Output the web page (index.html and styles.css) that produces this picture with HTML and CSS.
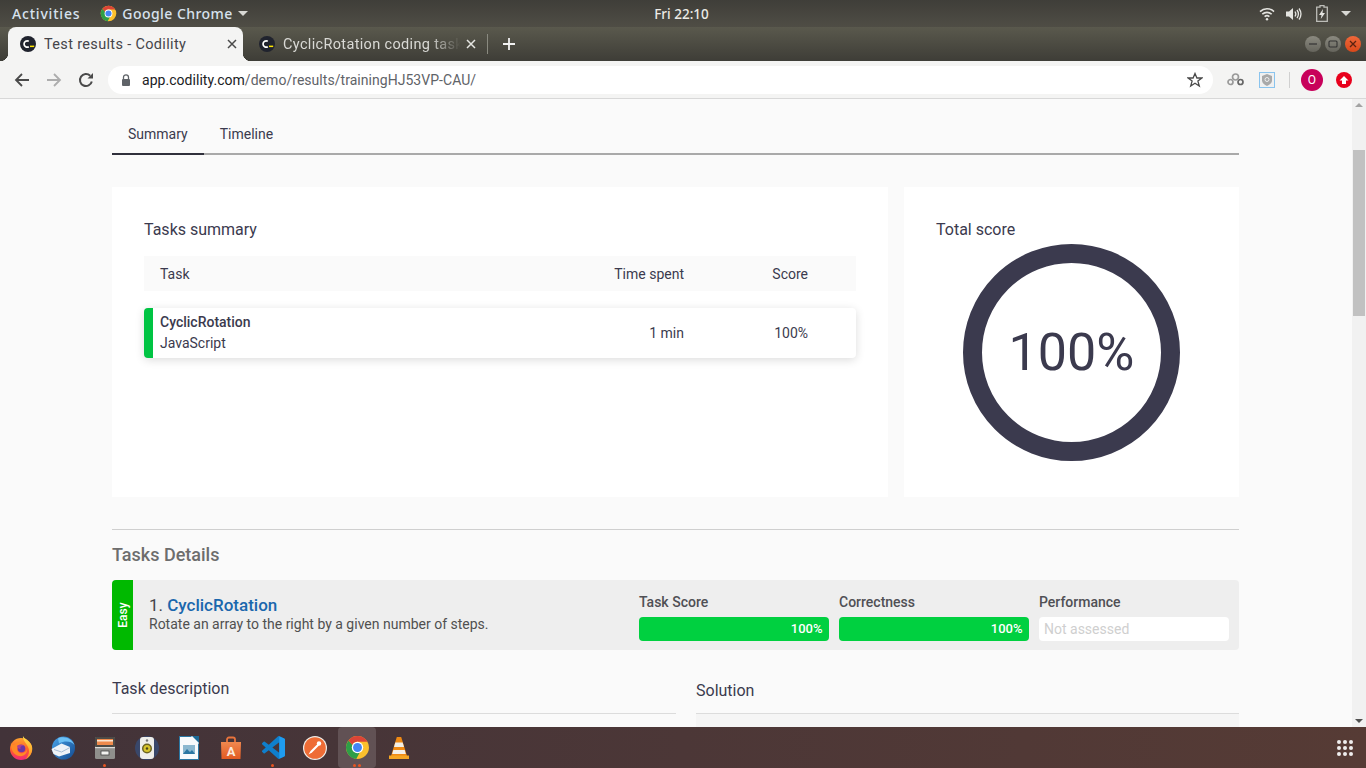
FILE: index.html
```html
<!DOCTYPE html>
<html lang="en">
<head>
    <meta charset="UTF-8">
    <meta name="viewport" content="width=device-width, initial-scale=1.0">
    <title>Test results - Codility</title>
    <link rel="stylesheet" href="styles.css">
</head>
<body>
    <svg class="defs" width="0" height="0">
        <defs>
            <linearGradient id="fox" x1="0" y1="0" x2="0" y2="1">
                <stop offset="0" stop-color="#ffa42e"/>
                <stop offset=".55" stop-color="#ff5a2c"/>
                <stop offset="1" stop-color="#f0297a"/>
            </linearGradient>
            <linearGradient id="flame" x1="0" y1="0" x2="0" y2="1">
                <stop offset="0" stop-color="#ffe04a"/>
                <stop offset="1" stop-color="#ff8a1e"/>
            </linearGradient>
            <linearGradient id="bird" x1="0" y1="0" x2="1" y2="1">
                <stop offset="0" stop-color="#4aa5ea"/>
                <stop offset="1" stop-color="#12498f"/>
            </linearGradient>
            <linearGradient id="bag" x1="0" y1="0" x2="0" y2="1">
                <stop offset="0" stop-color="#f0884f"/>
                <stop offset="1" stop-color="#e25a22"/>
            </linearGradient>
        </defs>
        <symbol id="chrome" viewBox="0 0 24 24">
            <circle cx="12" cy="12" r="11" fill="#fbc02d"/>
            <path d="M3.4 5.2A11 11 0 0 0 10.8 22.93L15 15 7 9Z" fill="#2e9e47"/>
            <path d="M12 1A11 11 0 0 1 21.53 6.5H12A5.5 5.5 0 0 0 7 9.7L3.4 5.2A11 11 0 0 1 12 1Z" fill="#db4437"/>
            <circle cx="12" cy="12" r="5.5" fill="#fff"/>
            <circle cx="12" cy="12" r="4.3" fill="#4285f4"/>
        </symbol>
        <symbol id="codility" viewBox="0 0 16 16">
            <circle cx="8" cy="8" r="8" fill="#20232e"/>
            <path d="M8.800 5.200A3.200 3.200 0 1 0 8.800 10.800" fill="none" stroke="#fff" stroke-width="1.700"/>
            <rect x="10" y="9.600" width="4.200" height="1.500" fill="#ffe600"/>
        </symbol>
    </svg>

    <!-- gnome top bar -->
    <div class="topbar">
        <div class="topbar-left">
            <span class="activities">Activities</span>
            <svg class="app-icon" width="17" height="17"><use href="#chrome"/></svg>
            <span class="app-name">Google Chrome</span>
            <span class="caret"></span>
        </div>
        <div class="clock">Fri 22:10</div>
        <div class="topbar-right">
            <svg width="16" height="14" viewBox="0 0 16 14" fill="none" stroke="#e4e4e0" stroke-width="1.6">
                <path d="M1 4.6C5 .8 11 .8 15 4.6"/>
                <path d="M3.3 7.2C6 4.7 10 4.7 12.7 7.2"/>
                <path d="M5.6 9.6C7 8.5 9 8.5 10.4 9.6"/>
                <circle cx="8" cy="12.2" r="1.2" fill="#e4e4e0" stroke="none"/>
            </svg>
            <svg class="sound" width="16" height="14" viewBox="0 0 16 14" fill="none" stroke="#e4e4e0" stroke-width="1.3">
                <path d="M0 4.5H3L7 1V13L3 9.500H0Z" fill="#e4e4e0" stroke="none"/>
                <path d="M9 4.500C10 6 10 8 9 9.500"/>
                <path d="M11 3C12.800 5.500 12.800 8.500 11 11"/>
                <path d="M13 1.500C15.500 5 15.500 9 13 12.500"/>
            </svg>
            <svg class="battery" width="12" height="17" viewBox="0 0 12 17">
                <path d="M4 .7H8V2.200H11.300V16.300H.7V2.200H4Z" fill="none" stroke="#bdbdb8" stroke-width="1.300"/>
                <path d="M7 4 3 10H5.500L4.800 14 9 8H6.500Z" fill="#e4e4e0"/>
            </svg>
            <span class="caret"></span>
        </div>
    </div>

    <!-- tab strip -->
    <div class="tabstrip">
        <div class="tab tab-active">
            <svg width="16" height="16"><use href="#codility"/></svg>
            <span class="tab-title">Test results - Codility</span>
            <svg class="tab-close" width="10" height="10" viewBox="0 0 10 10"><path d="M1 1 9 9M9 1 1 9" stroke="#4a4a4a" stroke-width="1.500"/></svg>
        </div>
        <div class="tab tab-other">
            <svg width="16" height="16"><use href="#codility"/></svg>
            <span class="tab-title">CyclicRotation coding task</span>
            <svg class="tab-close" width="10" height="10" viewBox="0 0 10 10"><path d="M1 1 9 9M9 1 1 9" stroke="#e6e6e2" stroke-width="1.500"/></svg>
        </div>
        <span class="tab-sep"></span>
        <svg class="new-tab" width="12" height="12" viewBox="0 0 12 12"><path d="M6 0V12M0 6H12" stroke="#f1f1f1" stroke-width="1.800"/></svg>
        <div class="window-buttons">
            <span class="win-btn"><svg width="10" height="10" viewBox="0 0 10 10"><path d="M1 5H9" stroke="#333" stroke-width="1.200"/></svg></span>
            <span class="win-btn"><svg width="10" height="10" viewBox="0 0 10 10"><rect x="1" y="2" width="8" height="6" rx="1" fill="none" stroke="#333" stroke-width="1.100"/></svg></span>
            <span class="win-btn win-close"><svg width="10" height="10" viewBox="0 0 10 10"><path d="M2 2 8 8M8 2 2 8" stroke="#5a2210" stroke-width="1.300"/></svg></span>
        </div>
    </div>

    <!-- toolbar -->
    <div class="toolbar">
        <svg class="nav-icon" width="16" height="16" viewBox="0 0 16 16" fill="none" stroke="#4a4a4a" stroke-width="1.800"><path d="M15 8H2M8 2 2 8 8 14"/></svg>
        <svg class="nav-icon" width="16" height="16" viewBox="0 0 16 16" fill="none" stroke="#adadad" stroke-width="1.800"><path d="M1 8H14M8 2 14 8 8 14"/></svg>
        <svg class="nav-icon" width="16" height="16" viewBox="0 0 16 16" fill="none" stroke="#4a4a4a" stroke-width="2"><path d="M13.800 9.500A6 6 0 1 1 12.200 3.800"/><path d="M15 1V6.500H9.500" fill="#4a4a4a" stroke="none"/></svg>
        <div class="omnibox">
            <svg width="10" height="12" viewBox="0 0 10 12"><path d="M2.500 5V3.300A2.500 2.500 0 0 1 7.500 3.300V5" fill="none" stroke="#5f6368" stroke-width="1.300"/><rect x="1" y="5" width="8" height="7" rx="1" fill="#5f6368"/></svg>
            <span class="url"><span class="url-host">app.codility.com</span>/demo/results/trainingHJ53VP-CAU/</span>
            <svg class="star" width="16" height="16" viewBox="0 0 16 16"><path d="M8 1.500 9.900 6H14.800L10.900 9.100 12.300 14 8 11.200 3.700 14 5.100 9.100 1.200 6H6.100Z" fill="none" stroke="#4a4a4a" stroke-width="1.300"/></svg>
        </div>
        <div class="extensions">
            <svg width="17" height="13" viewBox="0 0 17 13" fill="none" stroke="#9a9a9a" stroke-width="1.700"><circle cx="3.500" cy="9" r="2.500"/><circle cx="8.500" cy="4" r="3"/><circle cx="13.500" cy="9" r="2.500" stroke="#666"/></svg>
            <span class="ext-shield"><svg width="10" height="12" viewBox="0 0 10 12"><path d="M5 0 10 2V6.500C10 9 7.500 11 5 12 2.500 11 0 9 0 6.500V2Z" fill="#a9a9a9"/><circle cx="5" cy="5.500" r="2" fill="none" stroke="#eee" stroke-width="1"/></svg></span>
            <span class="ext-sep"></span>
            <span class="avatar">O</span>
            <span class="ext-upload"><svg width="10" height="10" viewBox="0 0 10 10"><path d="M5 1 9.500 5.500H7V9H3V5.500H.5Z" fill="#fff"/></svg></span>
        </div>
    </div>

    <!-- page -->
    <div class="viewport">
        <main class="page">
            <nav class="page-tabs">
                <a class="page-tab active">Summary</a>
                <a class="page-tab">Timeline</a>
            </nav>

            <div class="summary">
                <section class="card tasks-card">
                    <h3 class="card-title">Tasks summary</h3>
                    <div class="task-head">
                        <span class="col-task">Task</span>
                        <span class="col-time">Time spent</span>
                        <span class="col-score">Score</span>
                    </div>
                    <div class="task-row">
                        <div class="col-task">
                            <strong>CyclicRotation</strong>
                            <span>JavaScript</span>
                        </div>
                        <span class="col-time">1 min</span>
                        <span class="col-score">100%</span>
                    </div>
                </section>
                <section class="card score-card">
                    <h3 class="card-title">Total score</h3>
                    <div class="score-ring">100%</div>
                </section>
            </div>

            <hr class="divider">
            <h2 class="details-title">Tasks Details</h2>

            <div class="detail-row">
                <div class="difficulty"><span>Easy</span></div>
                <div class="detail-info">
                    <div class="detail-name">1. <a>CyclicRotation</a></div>
                    <div class="detail-desc">Rotate an array to the right by a given number of steps.</div>
                </div>
                <div class="metrics">
                    <div class="metric">
                        <div class="metric-label">Task Score</div>
                        <div class="bar">100%</div>
                    </div>
                    <div class="metric">
                        <div class="metric-label">Correctness</div>
                        <div class="bar">100%</div>
                    </div>
                    <div class="metric">
                        <div class="metric-label">Performance</div>
                        <div class="bar bar-empty">Not assessed</div>
                    </div>
                </div>
            </div>

            <div class="panels">
                <div class="panel panel-task">
                    <h3 class="panel-title">Task description</h3>
                </div>
                <div class="panel panel-solution">
                    <h3 class="panel-title">Solution</h3>
                    <div class="panel-body"></div>
                </div>
            </div>
        </main>
        <div class="scrollbar">
            <span class="arrow-up"></span>
            <div class="track"><div class="thumb"></div></div>
            <span class="arrow-down"></span>
        </div>
    </div>

    <!-- dock -->
    <footer class="dock">
        <div class="dock-apps">
            <div class="dock-item">
                <svg width="24" height="24" viewBox="0 0 24 24">
                    <circle cx="12" cy="13" r="11" fill="url(#fox)"/>
                    <path d="M14 0C15 3 20 4 22.500 9 25 15 21 22 16 23.500 20 20 21 15 19 11 17 7 13.500 4 14 0Z" fill="url(#flame)"/>
                    <path d="M2 5C2 8 3 9 5 9 7 6 12 6 14 9 11 8 8 10 8 13 8 16 11 18 14 17 17 16 18 14 18 12 19 17 15 21 10 20 5 19 1 14 2 5Z" fill="#ff8a26"/>
                    <circle cx="12.500" cy="12.500" r="3.800" fill="#6b36a6"/>
                    <path d="M8 10C10 8 13 8 15 9.500 12 9.500 11 11 11.500 13 9.500 13 8.500 12 8 10Z" fill="#b0408f"/>
                </svg>
            </div>
            <div class="dock-item">
                <svg width="24" height="24" viewBox="0 0 24 24">
                    <circle cx="12.500" cy="12" r="11.500" fill="url(#bird)"/>
                    <path d="M7 2.500C12-.5 21 2 23.500 9 20 5 14 4.500 8 7.500Z" fill="#6cc0f5"/>
                    <path d="M.5 13 10.500 7.500 19 11V17L8 20.500 2.500 18Z" fill="#eef2f7"/>
                    <path d="M3 13.500 10.500 16 19 11.500" fill="none" stroke="#a6bcd4" stroke-width="1"/>
                </svg>
            </div>
            <div class="dock-item has-dot">
                <svg width="20" height="22" viewBox="0 0 20 22">
                    <rect width="20" height="22" rx="1.500" fill="#8f8f8c"/>
                    <rect width="20" height="10" rx="1" fill="#4d4b47"/>
                    <rect x="2" y="2" width="16" height="6" fill="#ee8a4c"/>
                    <rect x="2" y="3" width="16" height="1.500" fill="#fbe4cf"/>
                    <rect y="10" width="20" height="1.200" fill="#dcdcd9"/>
                    <rect x="6" y="14" width="8" height="4" fill="#f2f2f0" stroke="#444" stroke-width=".8"/>
                </svg>
            </div>
            <div class="dock-item">
                <svg width="24" height="24" viewBox="0 0 24 24">
                    <circle cx="12" cy="12" r="12" fill="#39476a"/>
                    <rect x="5" y="1" width="14" height="22" rx="3" fill="#eeeeea"/>
                    <circle cx="12" cy="12.500" r="5" fill="#6b6320"/>
                    <circle cx="12" cy="12.500" r="3.500" fill="#d6c42c"/>
                    <circle cx="12" cy="12.500" r="1.200" fill="#4a4518"/>
                    <circle cx="12" cy="4.500" r="1.200" fill="#777"/>
                </svg>
            </div>
            <div class="dock-item">
                <svg width="20" height="24" viewBox="0 0 20 24">
                    <path d="M0 0H20V24H0Z" fill="#f7fafc"/>
                    <path d="M13 0H20V7Z" fill="#1b6a96"/>
                    <path d="M0 0H13L12 1H1V23H19V8L20 7V24H0Z" fill="#2a77a3"/>
                    <rect x="4" y="9" width="12" height="9" fill="#8bb8d0"/>
                    <path d="M4 18 8 13 11 16 13 14 16 18Z" fill="#2a77a3"/>
                </svg>
            </div>
            <div class="dock-item">
                <svg width="22" height="24" viewBox="0 0 22 24">
                    <path d="M7 7V3.500A2 2 0 0 1 9 1.500H13A2 2 0 0 1 15 3.500V7" fill="none" stroke="#e9743c" stroke-width="1.800"/>
                    <path d="M1 6H21L20.500 23H1.500Z" fill="url(#bag)"/>
                    <text x="11" y="20" class="bag-letter">A</text>
                </svg>
            </div>
            <div class="dock-item has-dot">
                <svg width="23" height="23" viewBox="0 0 24 24">
                    <path d="M23.150 2.587 18.210.21a1.494 1.494 0 0 0-1.705.29l-9.460 8.630-4.120-3.128a.999.999 0 0 0-1.276.057L.327 7.261A1 1 0 0 0 .326 8.740L3.899 12 .326 15.260a1 1 0 0 0 .001 1.479L1.650 17.940a.999.999 0 0 0 1.276.057l4.120-3.128 9.460 8.630a1.492 1.492 0 0 0 1.704.29l4.942-2.377A1.500 1.500 0 0 0 24 20.060V3.939a1.500 1.500 0 0 0-.850-1.352zm-5.146 14.861L10.826 12l7.178-5.448v10.896z" fill="#0f7fcc"/>
                    <path d="M18 .2 23.150 2.587A1.500 1.500 0 0 1 24 3.939V20.060A1.500 1.500 0 0 1 23.150 21.412L18 23.800Z" fill="#1f9cf0"/>
                </svg>
            </div>
            <div class="dock-item">
                <svg width="24" height="24" viewBox="0 0 24 24">
                    <circle cx="12" cy="12" r="12" fill="#f0ede8"/>
                    <circle cx="12" cy="12" r="10.800" fill="#ee6c35"/>
                    <path d="M5.500 18.500 7.500 15 14.500 8 16 9.500 9 16.500Z" fill="#fff"/>
                    <circle cx="16" cy="7.500" r="2.200" fill="#fff"/>
                </svg>
            </div>
            <div class="dock-item dock-active has-dots">
                <svg width="25" height="25"><use href="#chrome"/></svg>
            </div>
            <div class="dock-item">
                <svg width="20" height="24" viewBox="0 0 20 24">
                    <path d="M7.800 1H12.200L18 20H2Z" fill="#f08a14"/>
                    <path d="M6.300 6.500H13.700L15 11H5Z" fill="#f3f0e8"/>
                    <path d="M4.300 14H15.700L16.800 18H3.200Z" fill="#f3f0e8"/>
                    <path d="M0 19.500H20V23H0Z" fill="#f5a623"/>
                </svg>
            </div>
        </div>
        <div class="dock-grid">
            <i></i><i></i><i></i><i></i><i></i><i></i><i></i><i></i><i></i>
        </div>
    </footer>
</body>
</html>
```

FILE: styles.css
```css
* {
    box-sizing: border-box;
}
html, body {
    height: 100%;
}
body {
    margin: 0;
    display: flex;
    flex-direction: column;
    height: 100vh;
    overflow: hidden;
    font-family: Roboto, Arial, sans-serif;
    color: #3b3a4e;
    background: #fafafa;
}
.defs {
    position: absolute;
}
h2, h3 {
    margin: 0;
    font-weight: 400;
}

/* top bar */
.topbar {
    flex: 0 0 27px;
    display: grid;
    grid-template-columns: 1fr auto 1fr;
    align-items: center;
    padding: 0 15px 0 12px;
    background: linear-gradient(#3f3e39, #4f4d45);
    color: #ecebe6;
    font-family: "Noto Sans", sans-serif;
    font-size: 14px;
    font-weight: 500;
}
.topbar-left {
    display: flex;
    align-items: center;
}
.activities {
    margin-right: 20px;
    color: #d7e2ee;
    letter-spacing: .8px;
}
.app-icon {
    margin-right: 5px;
}
.app-name {
    color: #d7e2ee;
    letter-spacing: .45px;
}
.caret {
    width: 0;
    height: 0;
    margin-left: 5px;
    border-left: 5px solid transparent;
    border-right: 5px solid transparent;
    border-top: 5px solid #d8d8d4;
}
.clock {
    font-size: 13.500px;
}
.topbar-right {
    display: flex;
    justify-content: flex-end;
    align-items: center;
    gap: 12px;
}
.topbar-right .sound {
    margin-left: -1px;
}
.topbar-right .battery {
    margin-left: 2px;
}
.topbar-right .caret {
    margin-left: 1px;
}

/* tabs */
.tabstrip {
    flex: 0 0 34px;
    display: flex;
    align-items: flex-end;
    padding-left: 8px;
    background: linear-gradient(#5a594d, #3e3d37);
    font-size: 14.500px;
}
.tab {
    display: flex;
    align-items: center;
    height: 34px;
    padding: 0 11px 0 12px;
}
.tab-active {
    position: relative;
    width: 235px;
    padding-right: 6px;
    background: #f4f4f3;
    border-radius: 8px 8px 0 0;
    color: #45454a;
}
.tab-active::before,
.tab-active::after {
    content: "";
    position: absolute;
    bottom: 0;
    width: 8px;
    height: 8px;
}
.tab-active::before {
    left: -8px;
    background: radial-gradient(circle at 0 0, transparent 8px, #f4f4f3 8.500px);
}
.tab-active::after {
    right: -8px;
    background: radial-gradient(circle at 100% 0, transparent 8px, #f4f4f3 8.500px);
}
.tab-other {
    width: 244px;
    padding-left: 16px;
    color: #d9d9d5;
}
.tab-title {
    flex: 1;
    margin-left: 8px;
    overflow: hidden;
    white-space: nowrap;
    letter-spacing: .34px;
}
.tab-other .tab-title {
    -webkit-mask-image: linear-gradient(to right, #000 80%, transparent 97%);
    mask-image: linear-gradient(to right, #000 80%, transparent 97%);
}
.tab-close {
    flex: none;
}
.tab-sep {
    width: 1px;
    height: 20px;
    margin: 0 0 7px 0;
    background: #8a8a80;
}
.new-tab {
    margin: 0 0 11px 15px;
}
.window-buttons {
    display: flex;
    gap: 4px;
    margin: 0 5px 9px auto;
}
.win-btn {
    display: flex;
    align-items: center;
    justify-content: center;
    width: 16px;
    height: 16px;
    border-radius: 50%;
    background: linear-gradient(#8b8a80, #65645c);
}
.win-close {
    background: linear-gradient(#f0683a, #d9481a);
}

/* toolbar */
.toolbar {
    flex: 0 0 38px;
    display: flex;
    align-items: center;
    padding: 0 14px;
    background: #f4f4f3;
    border-bottom: 1px solid #d8d8d8;
}
.nav-icon {
    margin-right: 16px;
}
.nav-icon:nth-child(3) {
    margin-right: 14px;
}
.omnibox {
    display: flex;
    align-items: center;
    width: 1105px;
    height: 28px;
    padding: 0 10px 0 13px;
    border-radius: 14px;
    background: #fff;
    color: #5f6368;
    font-size: 14px;
}
.url {
    flex: 1;
    margin-left: 11px;
    letter-spacing: .04px;
}
.url-host {
    color: #202124;
}
.extensions {
    display: flex;
    align-items: center;
    margin-left: 14px;
    flex: 1;
}
.ext-shield {
    display: flex;
    align-items: center;
    justify-content: center;
    width: 16px;
    height: 16px;
    margin-left: 15px;
    border: 1px solid #8ac4ee;
    background: #f0f0f0;
}
.ext-sep {
    width: 1px;
    height: 16px;
    margin: 0 11px 0 14px;
    background: #d0d0d0;
}
.avatar {
    display: flex;
    align-items: center;
    justify-content: center;
    width: 22px;
    height: 22px;
    border-radius: 50%;
    background: #c8005a;
    color: #fff;
    font-size: 12px;
}
.ext-upload {
    display: flex;
    align-items: center;
    justify-content: center;
    width: 16px;
    height: 16px;
    margin-left: 13px;
    border-radius: 50%;
    background: #e8001c;
}

/* page */
.viewport {
    flex: 1;
    display: flex;
    min-height: 0;
}
.page {
    flex: 1;
    min-width: 0;
    padding: 0 113px 0 112px;
    overflow: hidden;
    background: #fafafa;
}
.page-tabs {
    display: flex;
    height: 56px;
    border-bottom: 2px solid #a9a9a9;
}
.page-tab {
    padding: 27px 16px 0;
    font-size: 14px;
    line-height: 16px;
    height: 56px;
    color: #3b3a4e;
}
.page-tab.active {
    border-bottom: 2px solid #30303c;
}
.summary {
    display: flex;
    gap: 16px;
    margin-top: 32px;
    height: 310px;
}
.card {
    background: #fff;
}
.card-title {
    font-size: 16px;
    line-height: 20px;
}
.tasks-card {
    width: 776px;
    padding: 33px 32px 32px;
}
.score-card {
    flex: 1;
    padding: 33px 32px 32px;
}
.task-head,
.task-row {
    display: flex;
    align-items: center;
    font-size: 14px;
    padding-right: 48px;
}
.task-head {
    height: 35px;
    margin-top: 16px;
    padding-left: 16px;
    background: #fafafa;
}
.task-row {
    height: 50px;
    margin-top: 17px;
    padding-left: 7px;
    background: #fff;
    border-left: 9px solid #00c443;
    border-radius: 4px;
    box-shadow: 0 2px 10px rgba(0, 0, 0, .14);
}
.col-task {
    flex: 1;
}
.col-time {
    width: 120px;
    text-align: right;
}
.col-score {
    width: 124px;
    text-align: right;
}
.task-row .col-task {
    display: flex;
    flex-direction: column;
    gap: 3px;
    padding-bottom: 2px;
    line-height: 18px;
}
.task-row strong {
    font-weight: 500;
}
.score-ring {
    display: flex;
    align-items: center;
    justify-content: center;
    width: 217px;
    height: 217px;
    margin: 4px auto 0;
    border: 19px solid #3b3a4e;
    border-radius: 50%;
    font-size: 52px;
    font-weight: 400;
}
.divider {
    height: 1px;
    margin: 32px 0 0;
    border: 0;
    background: #cfcfcf;
}
.details-title {
    margin-top: 14px;
    font-size: 18px;
    line-height: 22px;
    font-weight: 500;
    color: #6d6d6d;
}
.detail-row {
    display: flex;
    height: 70px;
    margin-top: 14px;
    background: #eeeeee;
    border-radius: 4px;
}
.difficulty {
    display: flex;
    align-items: center;
    justify-content: center;
    width: 21px;
    background: #00b900;
    border-radius: 4px 0 0 4px;
    color: #fff;
    font-size: 12px;
    font-weight: 500;
}
.difficulty span {
    transform: rotate(-90deg);
}
.detail-info {
    flex: 1;
    padding: 16px 0 0 16px;
}
.detail-name {
    font-size: 17px;
    line-height: 19px;
    color: #45454a;
}
.detail-name a {
    color: #1a67ad;
    font-weight: 500;
}
.detail-desc {
    font-size: 14px;
    line-height: 18px;
    color: #505050;
}
.metrics {
    display: flex;
    gap: 10px;
    padding: 13px 10px 0 0;
}
.metric {
    width: 190px;
}
.metric-label {
    font-size: 14px;
    line-height: 18px;
    margin-bottom: 6px;
    font-weight: 500;
    color: #505055;
}
.bar {
    height: 24px;
    padding-right: 6.500px;
    border-radius: 4px;
    background: #00d040;
    color: #fff;
    font-size: 13px;
    font-weight: 500;
    line-height: 24px;
    text-align: right;
}
.bar-empty {
    padding: 0 0 0 5px;
    background: #fff;
    color: #cfcfcf;
    font-size: 14px;
    font-weight: 400;
    text-align: left;
}
.panels {
    display: flex;
    gap: 20px;
    margin-top: 29px;
}
.panel-task {
    flex: 0 0 564px;
}
.panel-solution {
    flex: 1;
}
.panel-title {
    height: 35px;
    font-size: 16px;
    line-height: 20px;
    border-bottom: 1px solid #dcdcdc;
}
.panel-solution .panel-title {
    padding-top: 2px;
}
.panel-body {
    height: 40px;
    background: #f5f5f5;
}

/* scrollbar */
.scrollbar {
    flex: 0 0 14px;
    display: flex;
    flex-direction: column;
    align-items: center;
    background: #f1f1f1;
}
.track {
    flex: 1;
    width: 100%;
    padding: 43px 1px 0;
}
.thumb {
    height: 166px;
    background: #c1c1c1;
}
.arrow-up,
.arrow-down {
    width: 0;
    height: 0;
    border-left: 4px solid transparent;
    border-right: 4px solid transparent;
}
.arrow-up {
    margin-top: 4px;
    border-bottom: 4px solid #a3a3a3;
}
.arrow-down {
    margin-bottom: 4px;
    border-top: 4px solid #505050;
}

/* dock */
.dock {
    flex: 0 0 41px;
    display: flex;
    justify-content: space-between;
    align-items: center;
    padding: 0 13px 0 0;
    background: linear-gradient(to right, #423339, #563b35);
}
.dock-apps {
    display: flex;
}
.dock-item {
    position: relative;
    display: flex;
    align-items: center;
    justify-content: center;
    width: 42px;
    height: 41px;
}
.dock-active {
    width: 38px;
    margin: 0 2px;
    background: rgba(255, 255, 255, .14);
    border-radius: 4px;
}
.has-dot::after {
    content: "";
    position: absolute;
    left: 19px;
    bottom: 1px;
    width: 3px;
    height: 3px;
    border-radius: 50%;
    background: #e95420;
}
.has-dots::after {
    content: "";
    position: absolute;
    left: 15px;
    bottom: 1px;
    width: 3px;
    height: 3px;
    border-radius: 50%;
    background: #e95420;
    box-shadow: 5px 0 #e95420;
}
.bag-letter {
    fill: #fbe9dd;
    font-family: Roboto, sans-serif;
    font-size: 13px;
    font-weight: 700;
    text-anchor: middle;
}
.dock-grid {
    display: grid;
    grid-template-columns: repeat(3, 4px);
    gap: 2px;
}
.dock-grid i {
    width: 4px;
    height: 4px;
    border-radius: 50%;
    background: #efeded;
}
```
